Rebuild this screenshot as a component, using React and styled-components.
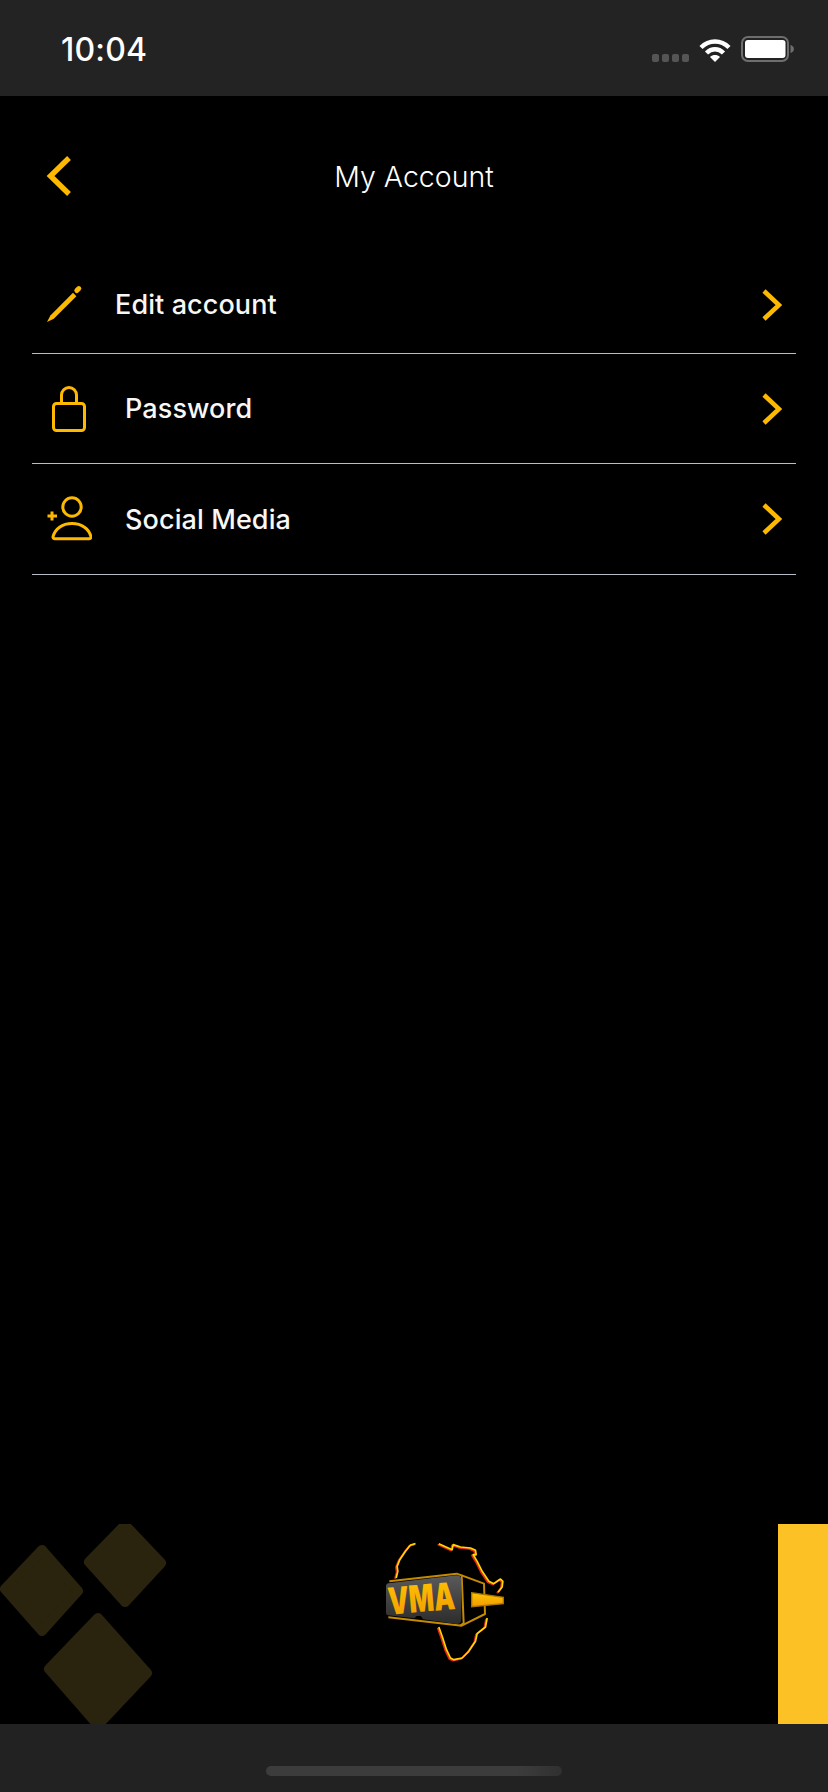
import styled, { createGlobalStyle } from 'styled-components';

const GlobalStyle = createGlobalStyle`
  html, body {
    margin: 0;
    padding: 0;
    background: #000;
  }
`;

const Page = styled.div`
  display: flex;
  flex-direction: column;
  width: 828px;
  height: 1792px;
  overflow: hidden;
  background: #000;
  font-family: Inter, "Liberation Sans", sans-serif;
  color: #fff;
`;

const StatusBar = styled.header`
  display: flex;
  justify-content: space-between;
  align-items: flex-start;
  height: 96px;
  box-sizing: border-box;
  padding: 30px 34px 0 61px;
  background: #232323;
`;

const Clock = styled.span`
  font-size: 32px;
  line-height: 40px;
  font-weight: 500;
  letter-spacing: 0.2px;
`;

const StatusIcons = styled.div`
  display: flex;
  align-items: flex-end;
  gap: 10px;
  height: 32px;
`;

const Header = styled.div`
  display: grid;
  grid-template-columns: 1fr auto 1fr;
  align-items: center;
  height: 160px;
  box-sizing: border-box;
  padding: 58px 46px 60px;
`;

const BackButton = styled.button`
  display: block;
  width: 26px;
  height: 42px;
  padding: 0;
  border: 0;
  background: none;
`;

const Title = styled.h1`
  margin: 0;
  padding-top: 2px;
  font-size: 28.5px;
  line-height: 42px;
  font-weight: 300;
`;

const Menu = styled.nav`
  display: flex;
  flex-direction: column;
  margin: 0 32px;
`;

const Row = styled.div`
  display: flex;
  align-items: center;
  height: ${(p) => p.$height}px;
  box-sizing: border-box;
  padding: 0 14px;
  border-bottom: 1px solid #b9bdc6;
`;

const IconSlot = styled.span`
  display: flex;
  flex: none;
  width: ${(p) => p.$width}px;
`;

const RowLabel = styled.span`
  flex: 1;
  padding-top: 1px;
  font-size: 27px;
  font-weight: 500;
  letter-spacing: 0.1px;
  line-height: 36px;
  color: #f7f7f7;
`;

const Spacer = styled.div`
  flex: 1;
`;

const Brand = styled.div`
  display: flex;
  height: 200px;
  overflow: hidden;
`;

const LogoWrap = styled.div`
  margin-left: 190px;
`;

const Tab = styled.div`
  width: 50px;
  margin-left: auto;
  background: #fcc124;
`;

const BottomBar = styled.footer`
  display: flex;
  justify-content: center;
  height: 68px;
  padding-top: 42px;
  box-sizing: border-box;
  background: #222;
`;

const HomeIndicator = styled.div`
  width: 296px;
  height: 10px;
  border-radius: 5px;
  background: linear-gradient(to right, #3c3c3c 85%, #303030);
`;

const Y = '#fdb900';

const Signal = () => (
  <svg width="37" height="8" viewBox="0 0 37 8">
    {[0, 10, 20, 30].map((x) => (
      <rect key={x} x={x} width="7" height="8" rx="2" fill="#555" />
    ))}
  </svg>
);

const Wifi = () => (
  <svg width="32" height="25" viewBox="0 0 32 25" fill="none" stroke="#fff" strokeWidth="4.4">
    <path d="M2 10.5C10 2.5 22 2.5 30 10.5" />
    <path d="M7.5 16C12.5 11 19.5 11 24.5 16" />
    <path d="M16 25l-5-5c3-2.6 7-2.6 10 0z" fill="#fff" stroke="none" />
  </svg>
);

const Battery = () => (
  <svg width="53" height="26" viewBox="0 0 53 26" fill="none">
    <rect x="1" y="1" width="46" height="24" rx="6" stroke="#6e6e6e" strokeWidth="2" />
    <rect x="4" y="4" width="40.5" height="18" rx="3" fill="#fff" />
    <path d="M49.5 9c2 .6 3.4 2 3.4 4s-1.4 3.4-3.4 4z" fill="#6e6e6e" />
  </svg>
);

const BackIcon = () => (
  <svg width="26" height="42" viewBox="0 0 26 42" fill="none" stroke={Y} strokeWidth="5.4">
    <path d="M23 3L4.5 21 23 39" />
  </svg>
);

const Chevron = () => (
  <svg width="20" height="32" viewBox="0 0 20 32" fill="none" stroke={Y} strokeWidth="4.6">
    <path d="M2 2l15 14L2 30" />
  </svg>
);

const PencilIcon = () => (
  <svg width="46" height="50" viewBox="0 0 46 50" fill={Y}>
    <path d="M1 42l3.4-6.6L27 12.8l3.4 3.4L7.8 38.8z" />
    <path d="M30.8 10.6l2-2" stroke={Y} strokeWidth="5" strokeLinecap="round" />
  </svg>
);

const LockIcon = () => (
  <svg width="46" height="50" viewBox="0 0 46 50" fill="none" stroke={Y} strokeWidth="3">
    <rect x="7.5" y="19.5" width="31" height="27" rx="3" />
    <path d="M15.5 19.5V11a7.5 7.5 0 0 1 15 0v8.5" />
  </svg>
);

const SocialIcon = () => (
  <svg width="46" height="50" viewBox="0 0 46 50" fill="none" stroke={Y} strokeWidth="3">
    <circle cx="26" cy="13" r="9.2" />
    <path d="M9 44.8H43c1.5 0 2.2-1 1.9-2.4C43 35 36 29.5 26 29.5S9 35 7.1 42.4C6.8 43.8 7.5 44.8 9 44.8z" />
    <path d="M1.5 22H11M6 17.5V26.5" />
  </svg>
);

const Diamonds = () => (
  <svg width="170" height="200" viewBox="0 0 170 200" fill="#2a230d" stroke="#2a230d" strokeWidth="10" strokeLinejoin="round">
    <polygon points="42,26 78,67 42,107 5,65" />
    <polygon points="125,1 161,39 125,78 89,38" />
    <polygon points="98,94 147,149 98,201 49,145" />
  </svg>
);

const africaPaths = [
  'M165 102L150 106L135 125L118 150L110 170L112 185L107 205',
  'M235 102L275 120L278 105L300 112L330 115L345 122L347 135L338 135L350 155L365 185L385 215L400 222L420 208L427 215L425 232L413 248',
  'M235 352L245 380L258 420L270 445L280 450L305 445L325 425L345 395L350 372L375 352L380 325',
];

const Logo = () => (
  <svg width="160" height="160" viewBox="0 42 480 480" fill="none">
    <defs>
      <linearGradient id="gold" x1="0" y1="0" x2="0" y2="1">
        <stop offset="0" stopColor="#ffc400" />
        <stop offset="1" stopColor="#f09a00" />
      </linearGradient>
      <linearGradient id="visor" x1="0" y1="0" x2="0" y2="1">
        <stop offset="0" stopColor="#5a5a5a" />
        <stop offset="1" stopColor="#2c2c2c" />
      </linearGradient>
    </defs>
    {africaPaths.map((d) => (
      <g key={d} strokeLinejoin="round">
        <path d={d} stroke="#e8261c" strokeWidth="5.5" transform="translate(-2 1.5)" />
        <path d={d} stroke="#ffd800" strokeWidth="5" transform="translate(1.5 -1)" />
      </g>
    ))}
    <path d="M305 196L372 221L375 312L305 347L85 322" stroke="#c48a00" strokeWidth="6" strokeLinejoin="round" />
    <path d="M88 214L290 191L305 196L311 340L300 347" stroke="#c48a00" strokeWidth="6" strokeLinejoin="round" />
    <path
      d="M86 220L288 196Q304 195 304 212L304 326Q304 344 288 342L190 328L182 318L170 318L163 325L84 316Q78 315 78 308L78 229Q78 221 86 220z"
      fill="url(#visor)"
    />
    <text
      x="88"
      y="314"
      transform="rotate(-5 88 314)"
      fontFamily="Inter, Liberation Sans, sans-serif"
      fontWeight="900"
      fontSize="112"
      textLength="200"
      lengthAdjust="spacingAndGlyphs"
      fill="url(#gold)"
    >
      VMA
    </text>
    <polygon points="335,248 430,262 430,281 335,290" fill="url(#gold)" stroke="#a87400" strokeWidth="4" />
  </svg>
);

const items = [
  { label: 'Edit account', icon: <PencilIcon />, slot: 69, height: 98 },
  { label: 'Password', icon: <LockIcon />, slot: 79, height: 110 },
  { label: 'Social Media', icon: <SocialIcon />, slot: 79, height: 111 },
];

export default function App() {
  return (
    <Page>
      <GlobalStyle />
      <StatusBar>
        <Clock>10:04</Clock>
        <StatusIcons>
          <Signal />
          <Wifi />
          <Battery />
        </StatusIcons>
      </StatusBar>
      <Header>
        <BackButton>
          <BackIcon />
        </BackButton>
        <Title>My Account</Title>
      </Header>
      <Menu>
        {items.map((item) => (
          <Row key={item.label} $height={item.height}>
            <IconSlot $width={item.slot}>{item.icon}</IconSlot>
            <RowLabel>{item.label}</RowLabel>
            <Chevron />
          </Row>
        ))}
      </Menu>
      <Spacer />
      <Brand>
        <Diamonds />
        <LogoWrap>
          <Logo />
        </LogoWrap>
        <Tab />
      </Brand>
      <BottomBar>
        <HomeIndicator />
      </BottomBar>
    </Page>
  );
}
